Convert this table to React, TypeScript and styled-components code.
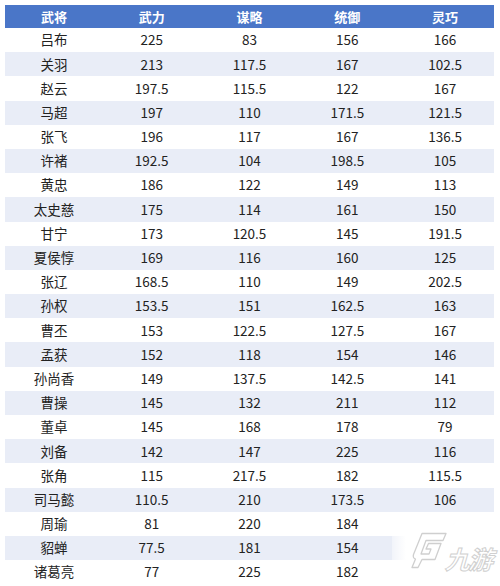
import React from "react";
import styled, {createGlobalStyle} from "styled-components";

const GlobalStyle = createGlobalStyle`
html, body {
    margin: 0;
    padding: 0;
    background: #fff;
}
body {
    font-family: "Noto Sans CJK SC", "Noto Sans", sans-serif;
}
`

const Page = styled.div`
    position: relative;
    width: 500px;
    height: 586px;
    padding: 5px;
    box-sizing: border-box;
    overflow: hidden;
`
const Table = styled.div`
    display: flex;
    flex-direction: column;
    width: 489px;
`
const Row = styled.div<{ $striped?: boolean }>`
    display: grid;
    grid-template-columns: repeat(5, 1fr);
    align-items: center;
    height: 24.2px;
    background: ${p => p.$striped ? "#e9edf7" : "#fff"};
`
const HeadRow = styled(Row)`
    height: 23px;
    background: #4a76c8;
`
const Cell = styled.div`
    text-align: center;
    font-size: 13.5px;
    line-height: 1;
    color: #222;
`
const HeadCell = styled(Cell)`
    color: #fff;
    font-weight: 700;
    font-size: 13px;
`
const Watermark = styled.div`
    position: absolute;
    left: 392px;
    top: 514px;
    right: 0;
    bottom: 0;
    background: linear-gradient(to right, rgba(255, 255, 255, 0.4), #fff 14px);
    display: flex;
    align-items: flex-end;
    padding: 0 0 17px 19px;
    gap: 1px;
`
const LogoText = styled.span`
    font-family: "Noto Sans CJK SC", sans-serif;
    font-size: 25px;
    font-weight: 700;
    line-height: 22px;
    color: #fff;
    -webkit-text-stroke: 1px #d0d0d0;
    transform: skewX(-16deg);
    letter-spacing: -2px;
    white-space: nowrap;
`

const heads = ["武将", "武力", "谋略", "统御", "灵巧"]

const rows: string[][] = [
    ["吕布", "225", "83", "156", "166"],
    ["关羽", "213", "117.5", "167", "102.5"],
    ["赵云", "197.5", "115.5", "122", "167"],
    ["马超", "197", "110", "171.5", "121.5"],
    ["张飞", "196", "117", "167", "136.5"],
    ["许褚", "192.5", "104", "198.5", "105"],
    ["黄忠", "186", "122", "149", "113"],
    ["太史慈", "175", "114", "161", "150"],
    ["甘宁", "173", "120.5", "145", "191.5"],
    ["夏侯惇", "169", "116", "160", "125"],
    ["张辽", "168.5", "110", "149", "202.5"],
    ["孙权", "153.5", "151", "162.5", "163"],
    ["曹丕", "153", "122.5", "127.5", "167"],
    ["孟获", "152", "118", "154", "146"],
    ["孙尚香", "149", "137.5", "142.5", "141"],
    ["曹操", "145", "132", "211", "112"],
    ["董卓", "145", "168", "178", "79"],
    ["刘备", "142", "147", "225", "116"],
    ["张角", "115", "217.5", "182", "115.5"],
    ["司马懿", "110.5", "210", "173.5", "106"],
    ["周瑜", "81", "220", "184", ""],
    ["貂蝉", "77.5", "181", "154", ""],
    ["诸葛亮", "77", "225", "182", ""],
]

const LogoMark = () => (
    <svg width="36" height="37" viewBox="0 0 36 37">
        <path d="M11 1.5 L35 1.5 L32 8.5 L15 8.5 L10 22 L18 22 L20 17 L15 17 L17.5 11.5 L30 11.5 L24 27.5 L11 27.5 L7 35.5 L1 35.5 L4.5 27 Q1.5 26 2.5 22.5 Z"
              fill="#fff" stroke="#cfcfcf" strokeWidth="1.3" strokeLinejoin="round"/>
    </svg>
)

const App = () => {
    return (<Page>
        <GlobalStyle/>
        <Table>
            <HeadRow>
                {heads.map(h => <HeadCell key={h}>{h}</HeadCell>)}
            </HeadRow>
            {rows.map((r, i) => (
                <Row key={r[0]} $striped={i % 2 === 1}>
                    {r.map((c, j) => <Cell key={j}>{c}</Cell>)}
                </Row>
            ))}
        </Table>
        <Watermark>
            <LogoMark/>
            <LogoText>九游</LogoText>
        </Watermark>
    </Page>)
}

export default App
